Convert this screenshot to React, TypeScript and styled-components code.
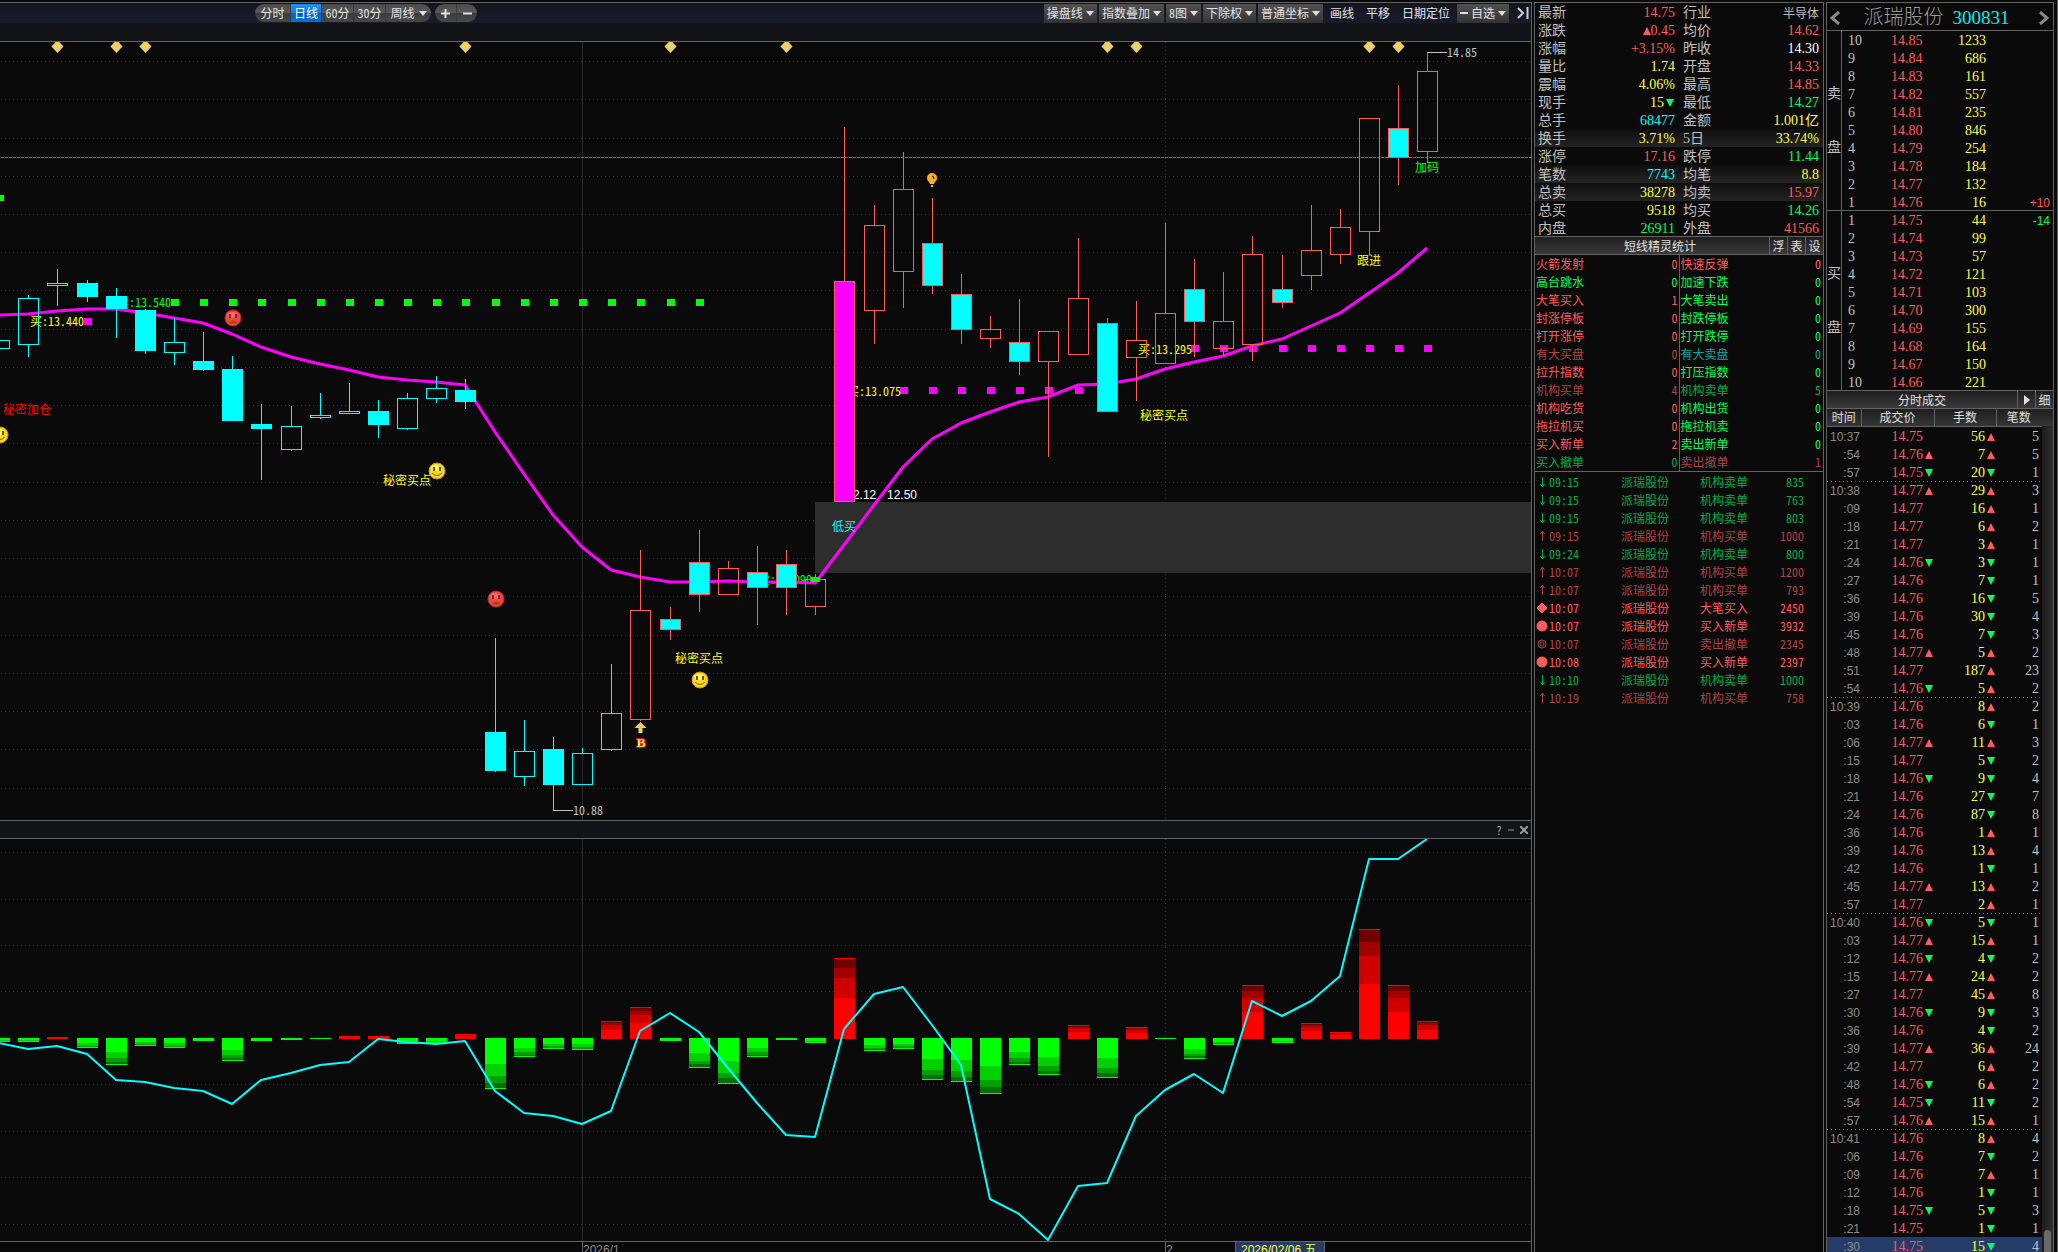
import React from "react";
import styled, { createGlobalStyle, css } from "styled-components";

const C = {
  bg: "#0a0a0a",
  line: "#626262",
  text: "#c0c0c0",
  red: "#ff5c5c",
  green: "#00ff5a",
  yellow: "#ffff40",
  cyan: "#00ffff",
  white: "#ffffff",
  dimRed: "#b04242",
  dimGreen: "#00ae4a",
  dimCyan: "#00a8a8",
};

const song = `"Noto Sans Mono CJK SC", "Noto Sans CJK SC", monospace`;
const times = `"Liberation Serif", "Noto Sans CJK SC", serif`;
const arial = `"Liberation Sans", "Noto Sans CJK SC", sans-serif`;

const GlobalStyle = createGlobalStyle`
  *, *::before, *::after { box-sizing: border-box; }
  body { margin: 0; background: ${C.bg}; color: ${C.text}; overflow: hidden; }
  button { margin: 0; padding: 0; border: 0; background: none; color: inherit; font: inherit; cursor: pointer; }
  table { width: 100%; border-collapse: collapse; table-layout: fixed; }
  th, td { padding: 0; font-weight: inherit; text-align: left; white-space: nowrap; }
`;

const Page = styled.main`
  display: grid;
  grid-template-columns: minmax(0, 1fr) 290px 228px;
  gap: 2px;
  height: 100vh;
  padding: 2px 3px 0 0;
  border-right: 1px solid ${C.line};
  overflow: hidden;
  background: ${C.bg};
  font: 300 12px/18px ${song};
`;

/* ---------- chart column ---------- */

const ChartColumn = styled.section`
  display: flex;
  flex-direction: column;
  min-width: 0;
  min-height: 0;
  border-top: 1px solid ${C.line};
  border-right: 1px solid ${C.line};
`;

const Toolbar = styled.header`
  display: flex;
  flex: none;
  align-items: center;
  height: 20px;
  padding: 0 2px 0 255px;
  background: linear-gradient(#14141c, #171c2e);
  color: #e4e4e4;
`;

const metal = "linear-gradient(#4a4a4a, #5a5a5a 50%, #3c3c3c 52%, #484848)";

const Pill = styled.div`
  display: flex;
  height: 18px;
  margin-right: 4px;
  border-radius: 9px;
  overflow: hidden;
  background: ${metal};
`;

const PillButton = styled.button<{ $w: number; $active?: boolean }>`
  display: flex;
  align-items: center;
  justify-content: center;
  gap: 4px;
  width: ${(p) => p.$w}px;
  height: 18px;
  border-left: 1px solid #3a3a3a;
  &:first-child { border-left: 0; }
  ${(p) =>
    p.$active &&
    css`
      background: linear-gradient(#1c94f4, #0a7ce4 50%, #0062c4 52%, #0070d8);
      color: #fff;
    `}
`;

const ToolGroup = styled.div`
  display: flex;
  align-items: center;
  gap: 2px;
  margin-left: auto;
`;

const DropButton = styled.button`
  display: flex;
  align-items: center;
  gap: 3px;
  height: 19px;
  padding: 0 3px;
  background: linear-gradient(#505050, #444 50%, #333);
`;

const LinkButton = styled.button`
  height: 19px;
  padding: 0 5px;
`;

const EndButton = styled.button`
  display: flex;
  padding: 0 0 0 6px;
`;

const InfoStrip = styled.div`
  flex: none;
  height: 19px;
  border-bottom: 1px solid ${C.line};
  background: #131418;
`;

const SubHeader = styled.div`
  display: flex;
  flex: none;
  align-items: center;
  justify-content: flex-end;
  gap: 6px;
  height: 19px;
  padding-right: 3px;
  border: solid ${C.line};
  border-width: 1px 0;
  background: #12141a;
  color: #9a9a9a;
`;

const SmallIconButton = styled.button`
  display: flex;
`;

const Plot = styled.svg<{ $grow: number }>`
  display: block;
  flex: ${(p) => p.$grow} 1 0;
  width: 100%;
  min-height: 0;
  text { font-family: ${song}; font-size: 12px; font-weight: 300; }
  text.arial { font-family: ${arial}; font-weight: 400; }
  text.mark { font-family: "Liberation Serif", serif; font-size: 13px; font-weight: 700; }
`;

const Caret = () => (
  <svg width="8" height="5" viewBox="0 0 8 5" aria-hidden="true">
    <path d="M0 0h8L4 5z" fill="#e0e0e0" />
  </svg>
);

const cx = (i: number) => Math.round(28.3 + 29.146 * i);

type Kind = "c" | "C" | "r" | "R" | "M";
// high, body top, body bottom, low, kind; the first entry sits at index -1
const candles: [number, number, number, number, Kind][] = [
  [340, 340, 348, 348, "c"], [295, 298, 344, 357, "c"], [269, 283, 285, 306, "c"], [280, 283, 296, 302, "C"],
  [288, 296, 308, 338, "C"], [309, 310, 350, 354, "C"], [318, 342, 352, 365, "c"], [332, 361, 369, 371, "C"],
  [356, 369, 420, 421, "C"], [404, 424, 428, 480, "C"], [406, 426, 449, 451, "c"], [393, 415, 417, 419, "c"],
  [383, 411, 413, 414, "c"], [400, 411, 424, 438, "C"], [393, 398, 428, 430, "c"], [376, 388, 398, 403, "c"],
  [379, 390, 401, 409, "C"], [638, 732, 770, 772, "C"], [720, 751, 776, 786, "c"], [737, 749, 784, 810, "C"],
  [748, 753, 784, 785, "c"], [664, 713, 749, 751, "c"], [550, 610, 719, 721, "r"], [607, 619, 629, 640, "R"],
  [530, 562, 594, 612, "R"], [561, 568, 594, 595, "r"], [546, 572, 587, 625, "R"], [550, 564, 587, 615, "R"],
  [574, 579, 606, 615, "r"], [127, 281, 501, 502, "M"], [205, 225, 310, 344, "r"], [152, 189, 271, 308, "r"],
  [198, 243, 285, 294, "R"], [274, 294, 329, 344, "R"], [316, 329, 338, 348, "r"], [299, 342, 361, 375, "R"],
  [331, 331, 361, 457, "r"], [238, 298, 354, 355, "r"], [318, 323, 411, 412, "R"], [301, 340, 357, 401, "r"],
  [223, 313, 363, 364, "r"], [259, 289, 321, 357, "R"], [272, 321, 348, 356, "r"], [236, 254, 344, 361, "r"],
  [255, 289, 302, 308, "R"], [205, 250, 275, 290, "r"], [209, 227, 254, 264, "r"], [118, 118, 231, 256, "r"],
  [85, 128, 157, 185, "R"], [53, 71, 151, 163, "r"],
];

const average = [
  315, 314, 311, 309, 309, 313, 318, 323, 334, 347, 357, 364, 370, 377, 380, 382, 385, 432, 474, 515, 547, 570, 577,
  582, 582, 581, 582, 582, 583, 545, 505, 467, 439, 423, 412, 402, 397, 385, 384, 379, 369, 362, 356, 346, 339, 326,
  313, 293, 273, 248,
];

const force = [
  1042, 1042, 1037, 1048, 1065, 1046, 1048, 1041, 1061, 1041, 1040, 1039, 1036, 1036, 1044, 1043, 1034, 1089, 1057,
  1049, 1050, 1021, 1007, 1041, 1068, 1084, 1057, 1040, 1043, 958, 1051, 1049, 1080, 1082, 1094, 1065, 1075, 1025,
  1078, 1027, 1039, 1059, 1045, 985, 1043, 1023, 1032, 929, 985, 1021,
];

const signal = [
  1043, 1049, 1046, 1054, 1080, 1082, 1088, 1091, 1104, 1080, 1073, 1065, 1062, 1039, 1042, 1044, 1041, 1091, 1113,
  1116, 1124, 1111, 1031, 1013, 1032, 1068, 1103, 1135, 1137, 1029, 994, 987, 1025, 1065, 1199, 1214, 1240, 1186, 1183,
  1116, 1090, 1074, 1093, 1001, 1016, 1001, 976, 859, 859, 839,
];

const path = (ys: number[]) => ys.map((y, n) => `${n ? "L" : "M"}${cx(n - 1)} ${y}`).join("");

const gridMain = [61, 99, 138, 176, 214, 252, 290, 329, 367, 405, 443, 482, 520, 558, 596, 635, 673, 711, 749, 788];
const gridSub = [852, 899, 945, 991, 1084, 1131, 1177, 1224];
const diamonds = [1, 3, 4, 15, 22, 26, 37, 38, 46, 47];
const range = (a: number, b: number) => Array.from({ length: b - a + 1 }, (_, n) => a + n);

const Grid = ({ rows, top, bottom }: { rows: number[]; top: number; bottom: number }) => (
  <g stroke="#303030" shapeRendering="crispEdges">
    {rows.map((y) => (
      <path key={y} d={`M1 ${y + 0.5}H1531`} strokeDasharray="1 3" />
    ))}
    <path d={`M582.5 ${top}V${bottom}`} stroke="#2a2a2a" />
    <path d={`M1165.5 ${top}V${bottom}`} strokeDasharray="1 3" />
  </g>
);

const Candle = ({ i, c }: { i: number; c: [number, number, number, number, Kind] }) => {
  const [hi, top, bot, lo, kind] = c;
  const x = cx(i);
  const color = kind === "c" || kind === "C" ? C.cyan : C.red;
  const fill = kind === "M" ? "#ff00ff" : kind === "C" || kind === "R" ? C.cyan : "none";
  return (
    <g stroke={color}>
      <path d={`M${x + 0.5} ${hi}V${top}M${x + 0.5} ${bot}V${lo}`} />
      <rect x={x - 9.5} y={top + 0.5} width={20} height={bot - top} fill={fill} />
    </g>
  );
};

const Face = ({ x, y, angry }: { x: number; y: number; angry?: boolean }) => (
  <g transform={`translate(${x} ${y})`}>
    <circle r="8" fill={angry ? "#f04838" : "#f6d820"} stroke={angry ? "#b02848" : "#c89418"} />
    <ellipse cx="-1" cy="-3" rx="5" ry="3" fill={angry ? "#ff6a50" : "#fff470"} />
    <path d="M-3 -4v4M3 -4v4" stroke={angry ? "#7a1878" : "#6a5410"} strokeWidth="2" />
    {angry ? (
      <path d="M-4 5Q0 1 4 5z" fill="#a83800" stroke="#c04000" />
    ) : (
      <path d="M-5 2Q0 7 5 2" fill="none" stroke="#8a6410" />
    )}
  </g>
);

const Dots = ({ from, to, y, color }: { from: number; to: number; y: number; color: string }) => (
  <>
    {range(from, to).map((i) => (
      <rect key={i} x={cx(i) - 3} y={y} width="8" height="7" fill={color} />
    ))}
  </>
);

const MainPlot = () => (
  <Plot $grow={778} viewBox="0 42 1531 778" role="img" aria-label="派瑞股份 日线">
    <Grid rows={gridMain} top={42} bottom={820} />
    <path d="M1 157.5H1531" stroke="#707070" strokeDasharray="3 1" shapeRendering="crispEdges" />
    <g fill="#f0cf65">
      {diamonds.map((i) => (
        <path key={i} d={`M${cx(i) + 0.5} 40l6 6.500l-6 6.500l-6-6.500z`} />
      ))}
    </g>
    <rect x="815" y="502" width="716" height="71" fill="#2d2d2d" />
    <g shapeRendering="crispEdges">
      <rect x="-4" y="195" width="8" height="6" fill="#00ff00" />
      <Dots from={5} to={23} y={299} color="#00ff00" />
      <Dots from={2} to={2} y={318} color="#ff00ff" />
      <Dots from={30} to={36} y={387} color="#ff00ff" />
      <Dots from={40} to={48} y={345} color="#ff00ff" />
    </g>
    <g fill="#ffff00">
      <text x="30" y="326">买:13.440</text>
      <text x="847" y="396">买:13.075</text>
      <text x="1138" y="354">买:13.295</text>
    </g>
    <g fill="#00ff00">
      <text x="117" y="307">卖:13.540</text>
      <text x="758" y="584">卖:12.090</text>
    </g>
    <text className="arial" x="917" y="499" textAnchor="end" fill="#fff">12.12 - 12.50</text>
    <path d={path(average)} fill="none" stroke="#ff00ff" strokeWidth="3" strokeLinejoin="round" />
    <rect x="811" y="577" width="9" height="5" fill="#00ff00" />
    <g shapeRendering="crispEdges">
      {candles.map((c, n) => (
        <Candle key={n} i={n - 1} c={c} />
      ))}
    </g>
    <g fill="#ffff00">
      <text x="383" y="485">秘密买点</text>
      <text x="675" y="663">秘密买点</text>
      <text x="1140" y="420">秘密买点</text>
      <text x="1357" y="265">跟进</text>
    </g>
    <text x="3" y="414" fill="#ff0000">秘密加仓</text>
    <text x="832" y="531" fill={C.cyan}>低买</text>
    <text x="1415" y="172" fill="#00ff00">加码</text>
    <g fill={C.text}>
      <text x="1447" y="57">14.85</text>
      <text x="573" y="815">10.88</text>
      <path d="M1427 52h20v1h-20zM553 810h20v1h-20z" />
    </g>
    <Face x={233} y={318} angry />
    <Face x={496} y={599} angry />
    <Face x={0} y={435} />
    <Face x={437} y={471} />
    <Face x={700} y={680} />
    <g transform="translate(932 179)">
      <path d="M0 -6a5 5 0 0 1 5 5c0 3-2 3-3 6h-4c-1-3-3-3-3-6a5 5 0 0 1 5-5zM-1 6h2v2h-2z" fill="#ffb01e" />
      <path d="M0 -3q2 0 2 3" fill="none" stroke={C.bg} />
    </g>
    <path d="M640.500 722l6 6h-4v5h-4v-5h-4z" fill="#f0cf65" />
    <text className="mark" x="641" y="747" textAnchor="middle" fill="#ffe060" stroke="#e01010" strokeWidth="2" paintOrder="stroke">B</text>
  </Plot>
);

const shadesUp = ["#ff0000", "#d00000", "#a00000", "#700000"];
const shadesDown = ["#00ff00", "#00d000", "#00a000", "#007000"];
const stops = [0, 0.5, 0.75, 0.88, 1];

const ForceBar = ({ i, y }: { i: number; y: number }) => {
  const up = y < 1038;
  const shades = up ? shadesUp : shadesDown;
  const base = up ? 1039 : 1038;
  const h = Math.abs(y - base);
  const at = (s: number) => Math.round(h * s);
  const x = cx(i) - 10;
  return (
    <g>
      {h > 3 ? (
        shades.map((fill, n) => {
          const a = at(stops[n]);
          const b = at(stops[n + 1]);
          return <rect key={fill} x={x} y={up ? base - b : base + a} width="21" height={b - a} fill={fill} />;
        })
      ) : (
        <rect x={x} y={Math.min(y, base)} width="21" height={h} fill={shades[0]} />
      )}
      <rect x={x} y={up ? y : y - 1} width="21" height="1" fill={shades[0]} />
    </g>
  );
};

const SubPlot = () => (
  <Plot $grow={413} viewBox="0 839 1531 413" role="img" aria-label="指标">
    <Grid rows={gridSub} top={839} bottom={1241} />
    <path d="M0 1038.5H1428" stroke="#000" />
    <g shapeRendering="crispEdges">
      {force.map((y, n) => (
        <ForceBar key={n} i={n - 1} y={y} />
      ))}
    </g>
    <path d={path(signal)} fill="none" stroke={C.cyan} strokeWidth="2" strokeLinejoin="round" />
    <g shapeRendering="crispEdges" stroke={C.line} fill="none">
      <path d="M0 1241.5H1531M582.5 1242V1252M1165.5 1242V1252" />
      <rect x="1235.5" y="1241.5" width="89" height="18" fill="#253c66" />
    </g>
    <text className="arial" x="583" y="1254" fill="#8c8c8c">2026/1</text>
    <text className="arial" x="1166" y="1254" fill="#8c8c8c">2</text>
    <text className="arial" x="1241" y="1254" fill={C.yellow}>2026/02/06 五</text>
  </Plot>
);

/* ---------- side panels ---------- */

const Panel = styled.section`
  display: flex;
  flex-direction: column;
  min-height: 0;
  overflow: hidden;
  border: 1px solid ${C.line};
  border-bottom: 0;
`;

const QuoteRow = styled.tr<{ $shade?: boolean }>`
  height: 18px;
  background: ${(p) => (p.$shade ? "linear-gradient(#0e0e0e, #242424)" : "none")};
`;

const QuoteLabel = styled.th<{ $second?: boolean }>`
  width: 48px;
  padding-top: 2px;
  padding-left: ${(p) => (p.$second ? 8 : 3)}px;
  font: 400 14px/16px ${times};
`;

const QuoteValue = styled.td<{ $color: string; $small?: boolean; $end?: boolean }>`
  width: ${(p) => (p.$end ? "auto" : "92px")};
  padding-right: ${(p) => (p.$end ? 4 : 0)}px;
  color: ${(p) => p.$color};
  font: ${(p) => (p.$small ? `300 12px/16px ${song}` : `400 14px/16px ${times}`)};
`;

const Flow = styled.div`
  display: flex;
  align-items: center;
  justify-content: flex-end;
  height: 18px;
  padding-top: 2px;
`;

const Slot = styled.span`
  display: flex;
  justify-content: center;
  width: 11px;
`;

const Tri = ({ up }: { up: boolean }) => (
  <svg width="8" height="8" viewBox="0 0 8 8" aria-label={up ? "升" : "降"}>
    <path d={up ? "M4 0L8 8H0z" : "M0 0h8L4 8z"} fill={up ? C.red : C.green} />
  </svg>
);

type Q = [string, string, string, string, string, string, boolean?];
const { red: R, green: G, yellow: Y, cyan: B, white: W, text: T } = C;
const quotes: Q[] = [
  ["最新", "14.75", R, "行业", "半导体", T],
  ["涨跌", "0.45", R, "均价", "14.62", R],
  ["涨幅", "+3.15%", R, "昨收", "14.30", W],
  ["量比", "1.74", Y, "开盘", "14.33", R],
  ["震幅", "4.06%", Y, "最高", "14.85", R],
  ["现手", "15", Y, "最低", "14.27", G],
  ["总手", "68477", B, "金额", "1.001亿", Y],
  ["换手", "3.71%", Y, "5日", "33.74%", Y, true],
  ["涨停", "17.16", R, "跌停", "11.44", G],
  ["笔数", "7743", B, "均笔", "8.8", Y, true],
  ["总卖", "38278", Y, "均卖", "15.97", R, true],
  ["总买", "9518", Y, "均买", "14.26", G],
  ["内盘", "26911", G, "外盘", "41566", R],
];

const QuoteTable = () => (
  <table>
    <tbody>
      {quotes.map(([a, av, ac, b, bv, bc, shade]) => (
        <QuoteRow key={a} $shade={shade}>
          <QuoteLabel scope="row">{a}</QuoteLabel>
          <QuoteValue $color={ac}>
            <Flow>
              {a === "涨跌" && <Tri up />}
              <span>{av}</span>
              {a === "现手" && (
                <Slot>
                  <Tri up={false} />
                </Slot>
              )}
            </Flow>
          </QuoteValue>
          <QuoteLabel scope="row" $second>{b}</QuoteLabel>
          <QuoteValue $color={bc} $small={b === "行业"} $end>
            <Flow>{bv}</Flow>
          </QuoteValue>
        </QuoteRow>
      ))}
    </tbody>
  </table>
);

const TitleBar = styled.div`
  display: flex;
  flex: none;
  height: 19px;
  margin-top: -1px;
  border: solid ${C.line};
  border-width: 1px 0;
  background: linear-gradient(#1e1e1e, #3a3a3a);
  color: #e0e0e0;
  line-height: 17px;
`;

const BarTitle = styled.h2<{ $shift?: boolean }>`
  flex: 1;
  margin: 0;
  padding-left: ${(p) => (p.$shift ? 16 : 0)}px;
  font: inherit;
  text-align: center;
`;

const BarButton = styled.button`
  display: flex;
  align-items: center;
  justify-content: center;
  width: 18px;
  border-left: 1px solid ${C.line};
`;

const StatRow = styled.tr`
  height: 18px;
`;

const StatName = styled.td<{ $color: string }>`
  width: 110px;
  padding-left: 1px;
  color: ${(p) => p.$color};
`;

const StatCount = styled.td<{ $color: string; $divide?: boolean }>`
  color: ${(p) => p.$color};
  ${(p) =>
    p.$divide
      ? css`
          width: 34px;
          padding-right: 1px;
          border-right: 1px solid ${C.line};
        `
      : css`
          padding-right: 2px;
        `}
  && { text-align: right; }
`;

const StatBox = styled.div`
  flex: none;
  margin-bottom: 1px;
  border-bottom: 1px solid ${C.line};
`;

const { dimRed: r, dimGreen: g, dimCyan: b } = C;
const stats: [string, string, string, string, string, string][] = [
  ["火箭发射", "0", R, "快速反弹", "0", R],
  ["高台跳水", "0", G, "加速下跌", "0", G],
  ["大笔买入", "1", R, "大笔卖出", "0", G],
  ["封涨停板", "0", R, "封跌停板", "0", G],
  ["打开涨停", "0", R, "打开跌停", "0", G],
  ["有大买盘", "0", r, "有大卖盘", "0", b],
  ["拉升指数", "0", R, "打压指数", "0", G],
  ["机构买单", "4", r, "机构卖单", "5", g],
  ["机构吃货", "0", R, "机构出货", "0", G],
  ["拖拉机买", "0", R, "拖拉机卖", "0", G],
  ["买入新单", "2", R, "卖出新单", "0", G],
  ["买入撤单", "0", g, "卖出撤单", "1", r],
];

type Mark = "down" | "up" | "diamond" | "dot" | "ring";
const events: [Mark, string, string, string, string][] = [
  ["down", "09:15", "机构卖单", "835", g],
  ["down", "09:15", "机构卖单", "763", g],
  ["down", "09:15", "机构卖单", "803", g],
  ["up", "09:15", "机构买单", "1000", r],
  ["down", "09:24", "机构卖单", "800", g],
  ["up", "10:07", "机构买单", "1200", r],
  ["up", "10:07", "机构买单", "793", r],
  ["diamond", "10:07", "大笔买入", "2450", R],
  ["dot", "10:07", "买入新单", "3932", R],
  ["ring", "10:07", "卖出撤单", "2345", r],
  ["dot", "10:08", "买入新单", "2397", R],
  ["down", "10:10", "机构卖单", "1000", g],
  ["up", "10:19", "机构买单", "758", r],
];

const EventMark = ({ kind }: { kind: Mark }) => (
  <svg width="12" height="12" viewBox="0 0 12 12" fill="none" stroke="currentColor" aria-hidden="true">
    {kind === "down" && <path d="M6.500 1v10M4.500 8l2 3l2-3" />}
    {kind === "up" && <path d="M6.500 11v-10M4.500 4l2-3l2 3" />}
    {kind === "diamond" && <path d="M6 1l5 5l-5 5l-5-5z" fill="currentColor" />}
    {kind === "dot" && <circle cx="6" cy="6" r="5" fill="currentColor" />}
    {kind === "ring" && (
      <>
        <circle cx="6" cy="6" r="4" />
        <circle cx="6" cy="6" r="2" />
      </>
    )}
  </svg>
);

const EventRow = styled.tr<{ $color: string }>`
  height: 18px;
  color: ${(p) => p.$color};
`;

const EventCell = styled.td<{ $w: number }>`
  width: ${(p) => p.$w}px;
`;

const EventAmount = styled.td`
  padding-right: 19px;
  && { text-align: right; }
`;

const MarkBox = styled.span`
  display: flex;
  align-items: center;
  padding-left: 1px;
  height: 18px;
`;

const StockHeader = styled.header`
  display: flex;
  flex: none;
  align-items: center;
  height: 28px;
  padding: 2px 4px 0 3px;
  border-bottom: 1px solid ${C.line};
`;

const StockTitle = styled.h1`
  display: flex;
  flex: 1;
  align-items: center;
  justify-content: center;
  gap: 9px;
  margin: 0;
  padding-right: 6px;
  color: #999;
  font: 300 20px/25px ${times};
`;

const StockCode = styled.span`
  color: #00f0f0;
  font-size: 19px;
  font-weight: 400;
`;

const NavButton = styled.button`
  display: flex;
`;

const Chevron = ({ right }: { right?: boolean }) => (
  <svg width="10" height="14" viewBox="0 0 10 14" aria-hidden="true">
    <path d={right ? "M1 1l7 6l-7 6" : "M9 1L2 7l7 6"} fill="none" stroke="#8a8a8a" strokeWidth="3" />
  </svg>
);

const BookSide = styled.div`
  display: flex;
  flex: none;
  height: 180px;
  border-bottom: 1px solid ${C.line};
`;

const SideName = styled.div`
  display: flex;
  flex-direction: column;
  justify-content: center;
  gap: 36px;
  width: 15px;
  border-right: 1px solid ${C.line};
  font: 400 14px/18px ${times};
`;

const BookTable = styled.table`
  flex: 1;
  width: auto;
  font: 400 14px/16px ${times};
`;

const BookRow = styled.tr`
  height: 18px;
  th, td { padding-top: 2px; }
`;

const Level = styled.th`
  width: 49px;
  padding-left: 6px;
`;

const Price = styled.td`
  width: 32px;
  color: ${C.red};
`;

const Volume = styled.td`
  width: 63px;
  color: ${C.yellow};
  && { text-align: right; }
`;

const Change = styled.td<{ $color: string }>`
  padding-right: 3px;
  color: ${(p) => p.$color};
  font: 400 12px/16px ${arial};
  && { text-align: right; }
`;

const sells: [string, string, string, string?][] = [
  ["10", "14.85", "1233"], ["9", "14.84", "686"], ["8", "14.83", "161"], ["7", "14.82", "557"], ["6", "14.81", "235"],
  ["5", "14.80", "846"], ["4", "14.79", "254"], ["3", "14.78", "184"], ["2", "14.77", "132"], ["1", "14.76", "16", "+10"],
];
const buys: [string, string, string, string?][] = [
  ["1", "14.75", "44", "-14"], ["2", "14.74", "99"], ["3", "14.73", "57"], ["4", "14.72", "121"], ["5", "14.71", "103"],
  ["6", "14.70", "300"], ["7", "14.69", "155"], ["8", "14.68", "164"], ["9", "14.67", "150"], ["10", "14.66", "221"],
];

const Book = ({ side, rows }: { side: string; rows: [string, string, string, string?][] }) => (
  <BookSide>
    <SideName>
      <span>{side}</span>
      <span>盘</span>
    </SideName>
    <BookTable>
      <tbody>
        {rows.map(([n, p, v, d]) => (
          <BookRow key={n}>
            <Level scope="row">{n}</Level>
            <Price>{p}</Price>
            <Volume>{v}</Volume>
            <Change $color={d && d[0] === "-" ? C.green : C.red}>{d}</Change>
          </BookRow>
        ))}
      </tbody>
    </BookTable>
  </BookSide>
);

const TradeArea = styled.div`
  display: flex;
  flex: 1;
  min-height: 0;
  overflow: hidden;
  position: relative;
`;

const TradeHead = styled.th<{ $w?: number }>`
  width: ${(p) => (p.$w ? `${p.$w}px` : "auto")};
  height: 17px;
  padding-right: ${(p) => (p.$w ? 0 : 12)}px;
  border-right: ${(p) => (p.$w ? `1px solid ${C.line}` : "0")};
  border-bottom: 1px solid ${C.line};
  background: linear-gradient(#1e1e1e, #363636);
  color: #e0e0e0;
  line-height: 16px;
  && { text-align: center; }
`;

const TradeRow = styled.tr<{ $minute?: boolean; $current?: boolean }>`
  height: 18px;
  background: ${(p) =>
    p.$current
      ? "#253c66"
      : p.$minute
        ? "repeating-linear-gradient(90deg, #707070 0 1px, transparent 1px 4px) 0 0 / 100% 1px no-repeat"
        : "none"};
  td { font: 400 14px/16px ${times}; }
`;

const Time = styled.td`
  padding: 2px 1px 0 0;
  color: #8c8c8c;
  && {
    font: 400 12px/16px ${arial};
    text-align: right;
  }
`;

const Num = styled.td<{ $color: string }>`
  color: ${(p) => p.$color};
`;

const Count = styled.td`
  padding: 2px 14px 0 0;
  && { text-align: right; }
`;

const ScrollTrack = styled.div`
  position: absolute;
  top: 17px;
  right: 0;
  bottom: 0;
  width: 11px;
  padding: 804px 2px 0 2px;
  background: linear-gradient(90deg, #1c1c1c, #303030);
`;

const ScrollThumb = styled.div`
  height: 100%;
  border-radius: 4px 4px 0 0;
  background: #6a6a6a;
`;

// time, last digits of price, price arrow, volume, volume arrow, deals
const tape = `10:37 75 - 56 u 5|:54 76 u 7 u 5|:57 75 d 20 d 1|10:38 77 u 29 u 3|:09 77 - 16 u 1|:18 77 - 6 u 2
:21 77 - 3 u 1|:24 76 d 3 d 1|:27 76 - 7 d 1|:36 76 - 16 d 5|:39 76 - 30 d 4|:45 76 - 7 d 3|:48 77 u 5 u 2
:51 77 - 187 u 23|:54 76 d 5 u 2|10:39 76 - 8 u 2|:03 76 - 6 d 1|:06 77 u 11 u 3|:15 77 - 5 d 2|:18 76 d 9 d 4
:21 76 - 27 d 7|:24 76 - 87 d 8|:36 76 - 1 u 1|:39 76 - 13 u 4|:42 76 - 1 d 1|:45 77 u 13 u 2|:57 77 - 2 u 1
10:40 76 d 5 d 1|:03 77 u 15 u 1|:12 76 d 4 d 2|:15 77 u 24 u 2|:27 77 - 45 u 8|:30 76 d 9 d 3|:36 76 - 4 d 2
:39 77 u 36 u 24|:42 77 - 6 u 2|:48 76 d 6 u 2|:54 75 d 11 d 2|:57 76 u 15 u 1|10:41 76 - 8 u 4|:06 76 - 7 d 2
:09 76 - 7 u 1|:12 76 - 1 d 1|:18 75 d 5 d 3|:21 75 - 1 d 1|:30 75 - 15 d 4`;
const trades = tape.split(/[|\n]/).map((s) => s.split(" "));

const Trades = () => (
  <TradeArea>
    <table>
      <thead>
        <tr>
          <TradeHead scope="col" $w={34}>时间</TradeHead>
          <TradeHead scope="col" $w={73}>成交价</TradeHead>
          <TradeHead scope="col" $w={62}>手数</TradeHead>
          <TradeHead scope="col">笔数</TradeHead>
        </tr>
      </thead>
      <tbody>
        {trades.map(([time, p, pa, v, va, n], k) => (
          <TradeRow key={k} $minute={k > 0 && time[0] !== ":"} $current={k === trades.length - 1}>
            <Time>{time}</Time>
            <Num $color={C.red}>
              <Flow>
                14.{p}
                <Slot>{pa !== "-" && <Tri up={pa === "u"} />}</Slot>
              </Flow>
            </Num>
            <Num $color={C.yellow}>
              <Flow>
                {v}
                <Slot>
                  <Tri up={va === "u"} />
                </Slot>
              </Flow>
            </Num>
            <Count>{n}</Count>
          </TradeRow>
        ))}
      </tbody>
    </table>
    <ScrollTrack>
      <ScrollThumb />
    </ScrollTrack>
  </TradeArea>
);

export default function App() {
  return (
    <>
      <GlobalStyle />
      <Page>
        <ChartColumn>
          <Toolbar>
            <Pill>
              <PillButton $w={35}>分时</PillButton>
              <PillButton $w={31} $active>日线</PillButton>
              <PillButton $w={32}>60分</PillButton>
              <PillButton $w={32}>30分</PillButton>
              <PillButton $w={46}>
                周线
                <Caret />
              </PillButton>
            </Pill>
            <Pill>
              <PillButton $w={21} aria-label="放大">
                <svg width="9" height="9" viewBox="0 0 9 9">
                  <path d="M0 4.500h9M4.500 0v9" stroke="#e0e0e0" strokeWidth="2" />
                </svg>
              </PillButton>
              <PillButton $w={21} aria-label="缩小">
                <svg width="9" height="9" viewBox="0 0 9 9">
                  <path d="M0 4.500h9" stroke="#e0e0e0" strokeWidth="2" />
                </svg>
              </PillButton>
            </Pill>
            <ToolGroup>
              {["操盘线", "指数叠加", "8图", "下除权", "普通坐标"].map((t) => (
                <DropButton key={t}>
                  {t}
                  <Caret />
                </DropButton>
              ))}
              {["画线", "平移", "日期定位"].map((t) => (
                <LinkButton key={t}>{t}</LinkButton>
              ))}
              <DropButton>
                <svg width="8" height="2" viewBox="0 0 8 2">
                  <path d="M0 1h8" stroke="#e0e0e0" strokeWidth="2" />
                </svg>
                自选
                <Caret />
              </DropButton>
              <EndButton aria-label="收起">
                <svg width="12" height="12" viewBox="0 0 12 12" fill="none" stroke="#d0d0d0" strokeWidth="2">
                  <path d="M1 1l5 5l-5 5M10.500 0v12" />
                </svg>
              </EndButton>
            </ToolGroup>
          </Toolbar>
          <InfoStrip />
          <MainPlot />
          <SubHeader>
            <SmallIconButton>?</SmallIconButton>
            <SmallIconButton aria-label="最小化">
              <svg width="6" height="2" viewBox="0 0 6 2">
                <path d="M0 1h6" stroke="#9a9a9a" />
              </svg>
            </SmallIconButton>
            <SmallIconButton aria-label="关闭">
              <svg width="8" height="8" viewBox="0 0 8 8">
                <path d="M0 0l8 8M8 0l-8 8" stroke="#9a9a9a" strokeWidth="2" />
              </svg>
            </SmallIconButton>
          </SubHeader>
          <SubPlot />
        </ChartColumn>

        <Panel>
          <QuoteTable />
          <TitleBar>
            <BarTitle $shift>短线精灵统计</BarTitle>
            {["浮", "表", "设"].map((t) => (
              <BarButton key={t}>{t}</BarButton>
            ))}
          </TitleBar>
          <StatBox>
            <table>
              <tbody>
                {stats.map(([a, av, ac, c, cv, cc]) => (
                  <StatRow key={a}>
                    <StatName $color={ac}>{a}</StatName>
                    <StatCount $color={ac} $divide>{av}</StatCount>
                    <StatName $color={cc}>{c}</StatName>
                    <StatCount $color={cc}>{cv}</StatCount>
                  </StatRow>
                ))}
              </tbody>
            </table>
          </StatBox>
          <table>
            <tbody>
              {events.map(([mark, time, type, amount, color], k) => (
                <EventRow key={k} $color={color}>
                  <EventCell $w={14}>
                    <MarkBox>
                      <EventMark kind={mark} />
                    </MarkBox>
                  </EventCell>
                  <EventCell $w={72}>{time}</EventCell>
                  <EventCell $w={79}>派瑞股份</EventCell>
                  <EventCell $w={60}>{type}</EventCell>
                  <EventAmount>{amount}</EventAmount>
                </EventRow>
              ))}
            </tbody>
          </table>
        </Panel>

        <Panel>
          <StockHeader>
            <NavButton aria-label="上一只">
              <Chevron />
            </NavButton>
            <StockTitle>
              派瑞股份
              <StockCode>300831</StockCode>
            </StockTitle>
            <NavButton aria-label="下一只">
              <Chevron right />
            </NavButton>
          </StockHeader>
          <Book side="卖" rows={sells} />
          <Book side="买" rows={buys} />
          <TitleBar>
            <BarTitle>分时成交</BarTitle>
            <BarButton aria-label="展开">
              <svg width="6" height="10" viewBox="0 0 6 10">
                <path d="M0 0l6 5l-6 5z" fill="#e0e0e0" />
              </svg>
            </BarButton>
            <BarButton>细</BarButton>
          </TitleBar>
          <Trades />
        </Panel>
      </Page>
    </>
  );
}
